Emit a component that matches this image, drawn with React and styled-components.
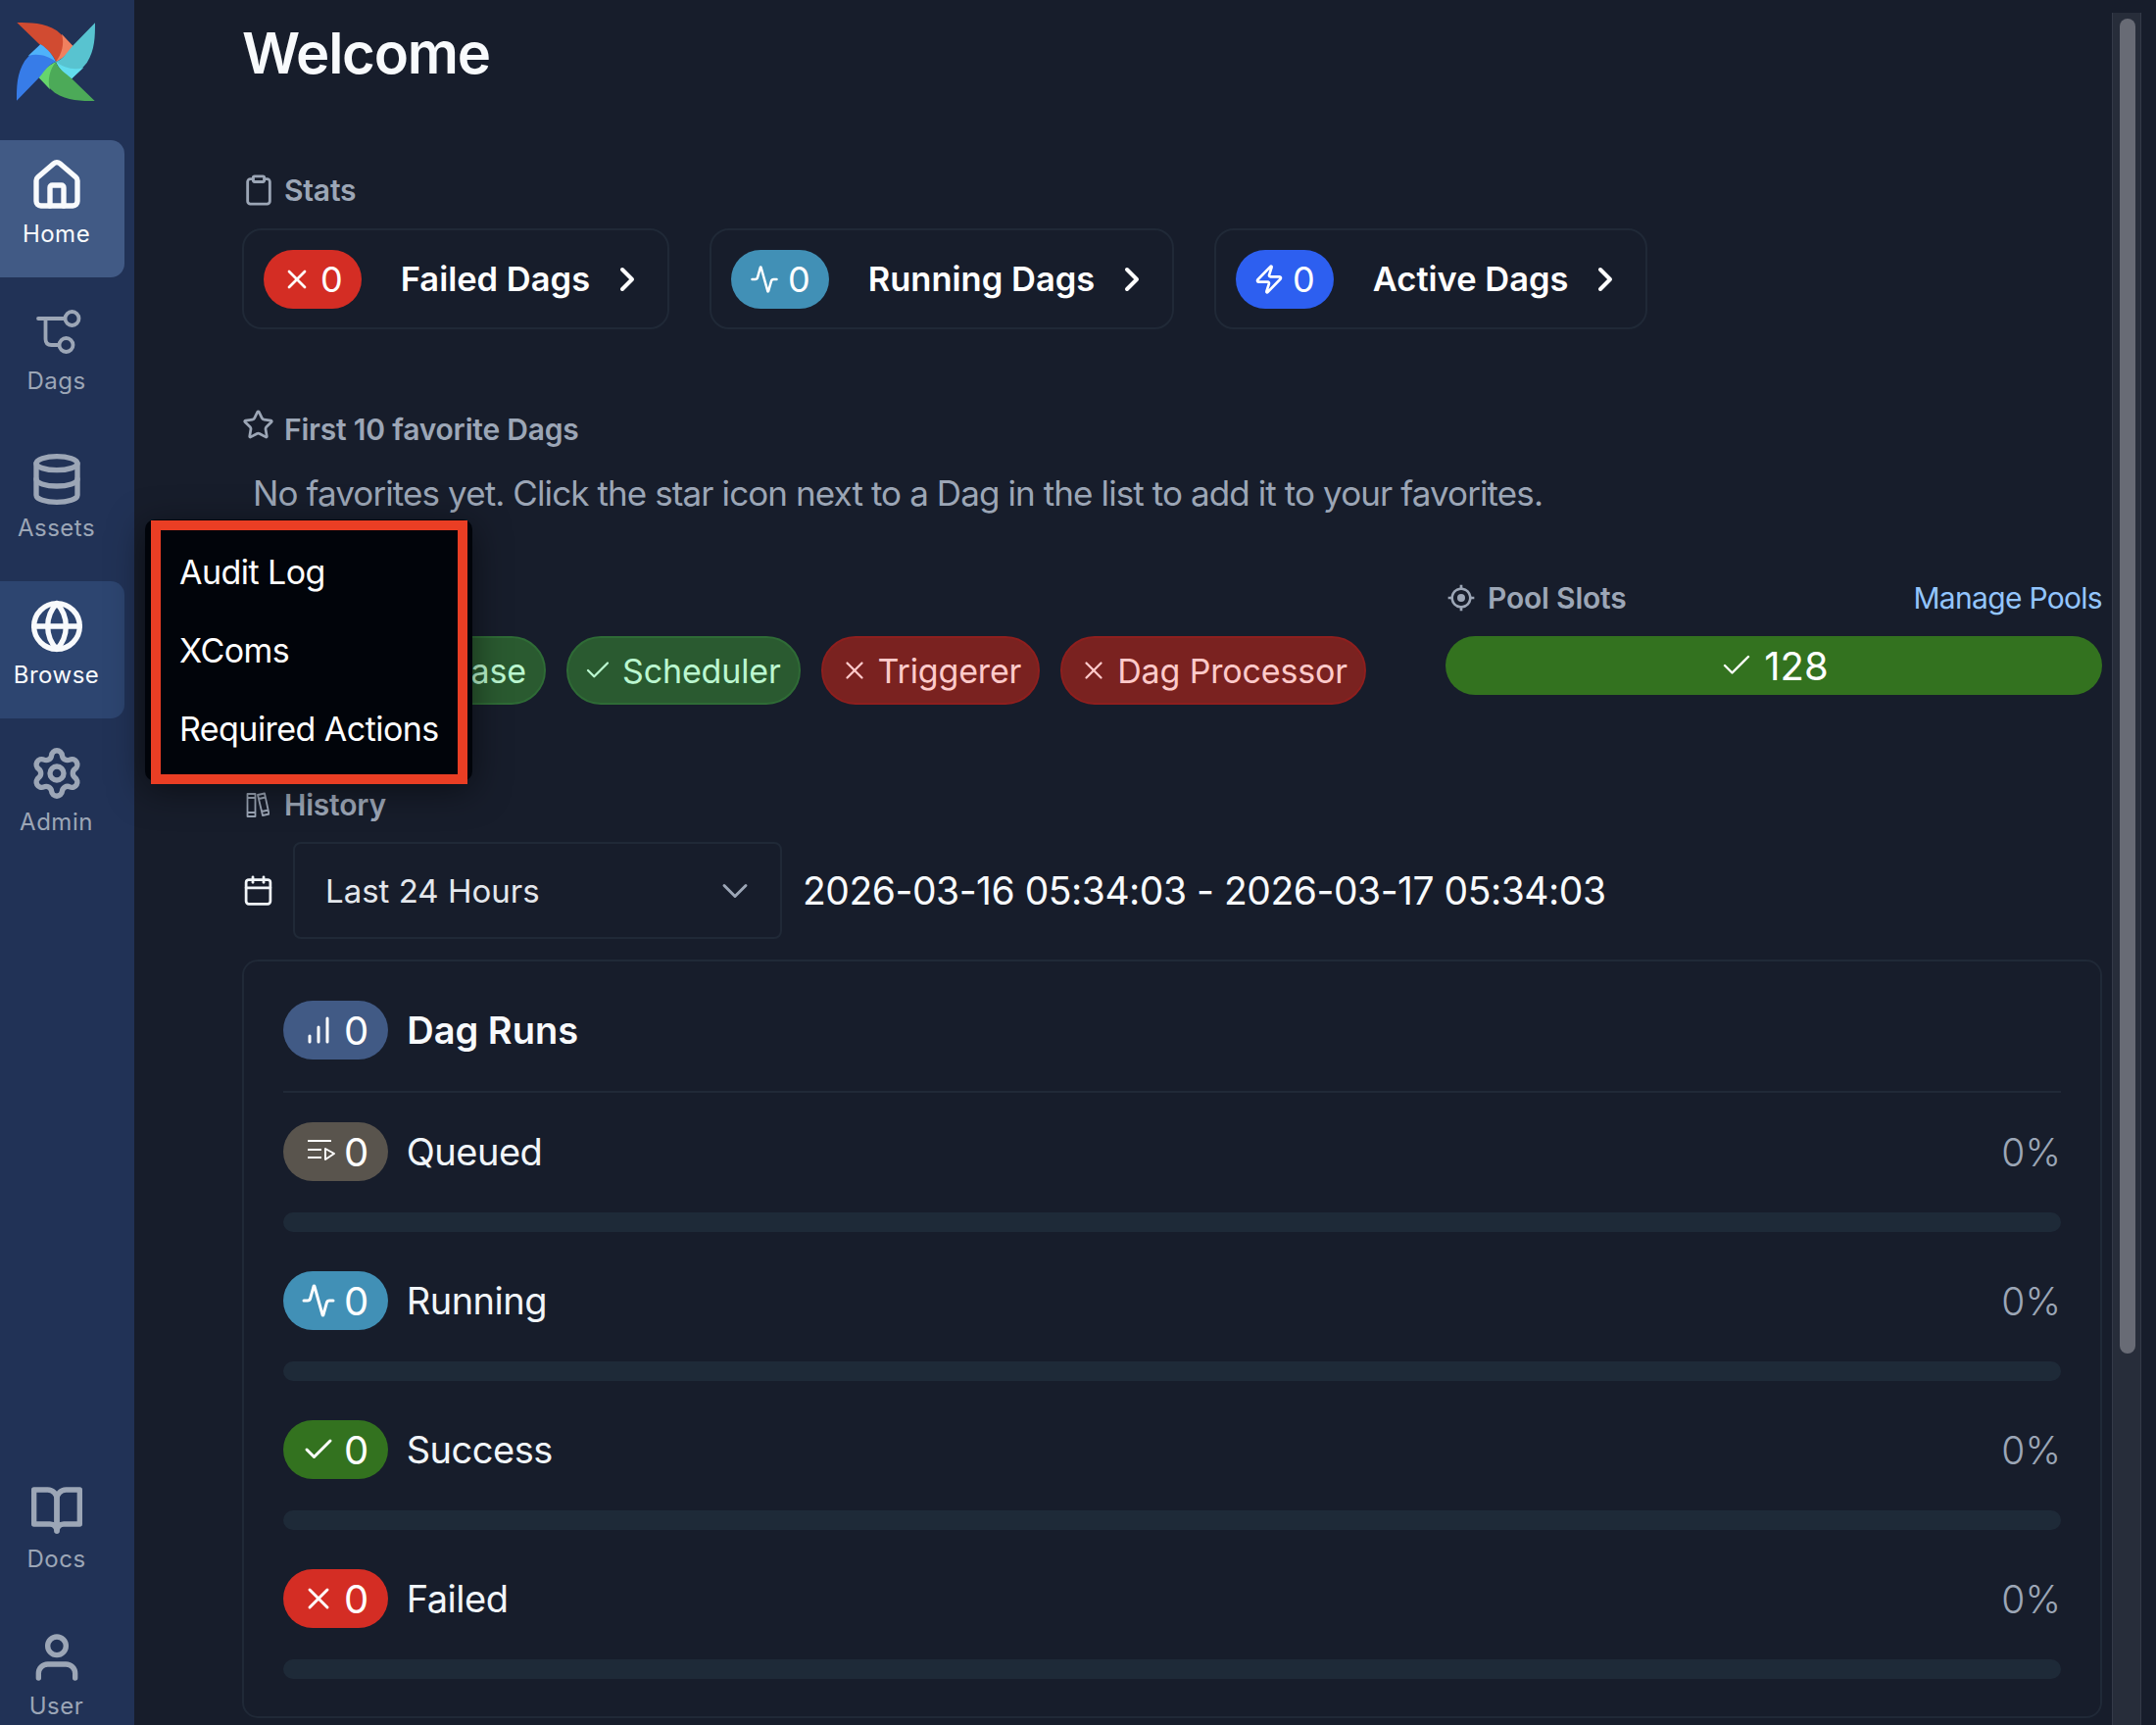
import React from "react";
import styled, { createGlobalStyle } from "styled-components";
import {
  Activity,
  Calendar,
  Check,
  ChevronDown,
  ChevronRight,
  Clipboard,
  Database,
  Globe,
  HeartPulse,
  House,
  Settings,
  Star,
  X,
  Zap,
} from "lucide-react";
import { FiBarChart, FiBookOpen, FiUser } from "react-icons/fi";
import { BiTargetLock } from "react-icons/bi";

const GlobalStyle = createGlobalStyle`
  html, body {
    margin: 0;
    padding: 0;
    background: #171d2b;
  }
  * {
    box-sizing: border-box;
  }
`;

const Page = styled.div`
  position: relative;
  display: flex;
  width: 2200px;
  height: 1760px;
  overflow: hidden;
  background: #171d2b;
  color: #ffffff;
  font-family: Inter, "Liberation Sans", sans-serif;
`;

// Sidebar
const Sidebar = styled.nav`
  flex: 0 0 137px;
  height: 1760px;
  overflow: hidden;
  background: #213256;
`;

const SidebarInner = styled.div`
  display: flex;
  flex-direction: column;
  height: 1785px;
  padding-top: 23px;
`;

const LogoBox = styled.div`
  display: flex;
  height: 80px;
  margin: 0 0 40px 17px;
`;

const NavList = styled.div`
  display: flex;
  flex-direction: column;
  gap: 10px;
  margin-top: ${(p) => (p.$bottom ? "auto" : "0")};
`;

const NavItem = styled.div`
  display: flex;
  flex-direction: column;
  align-items: center;
  width: 127px;
  height: 140px;
  padding: 18px 12px 0 0;
  border-radius: 0 14px 14px 0;
  background: ${(p) => p.$bg || "transparent"};
  color: ${(p) => (p.$bg ? "#f8fafc" : "#9ca6b6")};
`;

const NavLabel = styled.span`
  margin-top: 7px;
  font-size: 24px;
  line-height: 30px;
  letter-spacing: 0.5px;
`;

// Main area
const Main = styled.main`
  flex: 1;
  display: flex;
  min-width: 0;
`;

const Content = styled.div`
  flex: 1;
  min-width: 0;
  padding: 18px 0 0 110px;
`;

const Title = styled.h1`
  margin: 0 0 84px;
  font-size: 58px;
  line-height: 72px;
  font-weight: 600;
  letter-spacing: -1.2px;
  color: #f8fafc;
`;

const Heading = styled.div`
  display: flex;
  align-items: center;
  gap: ${(p) => p.$gap || "15px"};
  height: 40px;
  margin-top: ${(p) => p.$top || "0"};
  font-size: 30px;
  font-weight: 600;
  letter-spacing: -0.2px;
  color: #9ca6b6;
  svg {
    flex: none;
  }
`;

const StarMark = styled(Star)`
  margin-bottom: 10px;
`;

const Spaced = styled.div`
  display: flex;
  justify-content: space-between;
  align-items: center;
`;

const ManageLink = styled.a`
  font-size: 30px;
  letter-spacing: -0.7px;
  color: #93c5fd;
`;

const CardRow = styled.div`
  display: flex;
  gap: 41px;
  margin-top: 19px;
`;

const StatCard = styled.div`
  display: flex;
  align-items: center;
  width: ${(p) => p.$width}px;
  height: 103px;
  padding: 0 21px 0 20px;
  border: 2px solid #202937;
  border-radius: 20px;
`;

const Badge = styled.span`
  display: inline-flex;
  align-items: center;
  flex: none;
  height: 60px;
  padding: ${(p) => (p.$big ? "0 20px 0 18px" : "0 19px 0 18px")};
  gap: 8px;
  border-radius: 30px;
  background: ${(p) => p.$color};
  color: #ffffff;
  font-size: ${(p) => (p.$big ? "40px" : "36px")};
  font-weight: 400;
`;

const ActivityMark = styled(Activity)`
  margin: 0 1px;
`;

const StatLabel = styled.span`
  flex: 1;
  margin-left: 40px;
  font-size: 34.5px;
  font-weight: 600;
  color: #ffffff;
  white-space: nowrap;
`;

const EmptyText = styled.p`
  margin: 23px 0 0 11px;
  font-size: 35px;
  line-height: 44px;
  letter-spacing: -0.9px;
  color: #9ca6b6;
`;

const StatusRow = styled.div`
  display: flex;
  justify-content: space-between;
  margin-top: 65px;
`;

const HealthColumn = styled.div`
  flex: 1;
`;

const PoolColumn = styled.div`
  flex: 0 0 670px;
`;

const PillRow = styled.div`
  display: flex;
  gap: 21px;
  margin-top: 19px;
`;

const HealthPill = styled.span`
  display: inline-flex;
  align-items: center;
  justify-content: ${(p) => (p.$width ? "flex-end" : "flex-start")};
  gap: ${(p) => (p.$ok ? "10px" : "9px")};
  width: ${(p) => (p.$width ? `${p.$width}px` : "auto")};
  height: 70px;
  padding: ${(p) => (p.$ok ? "0 18px 0 15px" : "0 17px")};
  border: 2px solid ${(p) => (p.$ok ? "#2f6b36" : "#8e1f1e")};
  border-radius: 35px;
  background: ${(p) => (p.$ok ? "#2a5a30" : "#7a2220")};
  color: ${(p) => (p.$ok ? "#bbf7d0" : "#fecaca")};
  font-size: 34px;
  letter-spacing: -0.15px;
  white-space: nowrap;
`;

const PoolBar = styled.div`
  display: flex;
  align-items: center;
  justify-content: center;
  gap: 10px;
  height: 60px;
  margin-top: 19px;
  border-radius: 30px;
  background: #33721f;
  font-size: 40px;
`;

const DateRow = styled.div`
  display: flex;
  align-items: center;
  margin-top: 18px;
`;

const CalendarMark = styled(Calendar)`
  flex: none;
  margin-right: 19px;
  color: #f1f5f9;
`;

const SelectBox = styled.div`
  display: flex;
  align-items: center;
  justify-content: space-between;
  width: 499px;
  height: 99px;
  padding: 0 24px 0 31px;
  border: 2px solid #202937;
  border-radius: 8px;
  font-size: 33px;
  color: #e4e7ec;
  svg {
    color: #9ca6b6;
  }
`;

const DateRange = styled.span`
  margin-left: 21px;
  font-size: 39px;
  letter-spacing: -0.48px;
  color: #f8fafc;
`;

const RunsCard = styled.section`
  height: 774px;
  margin-top: 21px;
  padding: 40px 40px 0 40px;
  border: 2px solid #202937;
  border-radius: 16px;
`;

const RunsHeader = styled.div`
  display: flex;
  align-items: center;
  gap: 19px;
  padding-bottom: 32px;
  border-bottom: 2px solid #202937;
  font-size: 38px;
  font-weight: 600;
  color: #f8fafc;
`;

const RunRow = styled.div`
  margin-top: ${(p) => (p.$first ? "30px" : "40px")};
`;

const RunHead = styled.div`
  display: flex;
  align-items: center;
  gap: 19px;
  font-size: 38px;
  letter-spacing: -0.5px;
  color: #f1f5f9;
`;

const RunName = styled.span`
  flex: 1;
`;

const Percent = styled.span`
  font-size: 39px;
  font-weight: 300;
  letter-spacing: 0;
  color: #9ca6b6;
`;

const Track = styled.div`
  height: 20px;
  margin-top: 32px;
  border-radius: 10px;
  background: #1e2a38;
`;

// Scrollbar
const ScrollTrack = styled.div`
  flex: none;
  width: 30px;
  margin: 13px 15px 0 10px;
  padding: 6px 7px 0;
  border-left: 1px solid #343a48;
  border-right: 1px solid #343a48;
  background: #272d3a;
`;

const ScrollThumb = styled.div`
  width: 16px;
  height: 1362px;
  border-radius: 8px;
  background: #686b75;
`;

// Browse menu, open over the page
const Menu = styled.div`
  position: absolute;
  left: 148px;
  top: 530px;
  width: 334px;
  height: 267px;
  padding: 14px 0 0 35px;
  border-radius: 10px;
  background: #01040a;
  box-shadow: 0 8px 36px rgba(0, 0, 0, 0.5);
`;

const MenuItem = styled.div`
  height: 80px;
  font-size: 34px;
  line-height: 80px;
  letter-spacing: -0.55px;
  color: #ffffff;
  white-space: nowrap;
`;

const Highlight = styled.div`
  position: absolute;
  left: 6px;
  top: 1px;
  width: 323px;
  height: 269px;
  border: 10px solid #ea3e24;
`;

const bladeTurns = [
  { turn: 0, main: "#d14b31", light: "#f0805f" },
  { turn: 90, main: "#58c3d0", light: "#62ddee" },
  { turn: 180, main: "#4caa58", light: "#66d56c" },
  { turn: 270, main: "#377ce8", light: "#4fb2fa" },
];

const AirflowLogo = () => (
  <svg width="80" height="80" viewBox="-40 -40 80 80">
    {bladeTurns.map((b) => (
      <g key={b.turn} transform={`rotate(${b.turn})`}>
        <path
          fill={b.main}
          d="M0 0C-3 -8 -9 -11 -15.7 -16.7L-39.7 -40C-26 -40 -12 -40 1 -31.7C7 -27 13 -20 17.7 -15.7C13 -8 6 -3 0 0Z"
        />
        <path
          fill={b.light}
          d="M6 -28.3L17.7 -15.7C13 -8 6 -3 0 0C6 -8 9 -18 6 -28.3Z"
        />
      </g>
    ))}
  </svg>
);

const DagsIcon = () => (
  <svg width="56" height="56" viewBox="0 0 56 56" fill="none" stroke="currentColor" strokeWidth="3.8">
    <path d="M9 14H36" strokeLinecap="round" />
    <circle cx="43.5" cy="14" r="7" />
    <path d="M16.5 14V35Q16.5 41 22.5 41H30.5" />
    <circle cx="37.5" cy="41" r="7" />
  </svg>
);

const HistoryIcon = () => (
  <svg width="28" height="28" viewBox="-2.5 0 28 28" fill="none" stroke="currentColor" strokeWidth="1.8" strokeLinejoin="round">
    <path d="M3 3H11V26H3ZM3 7H11M3 22H11" />
    <path d="M13.5 4L20.5 2.5L25 23.5L18.5 25ZM14.5 8L21.5 6.5M17.5 21L24.5 19.5" />
  </svg>
);

const QueuedIcon = () => (
  <svg width="36" height="36" viewBox="0 0 36 36" fill="none" stroke="currentColor" strokeWidth="2">
    <path d="M7 7H31M7 16H21M7 24H21" />
    <path d="M25 15L34 20L25 26Z" strokeLinejoin="round" />
  </svg>
);

const navIcon = { size: 56, strokeWidth: 2.3 };

const runs = [
  { name: "Queued", color: "#59544d", icon: <QueuedIcon /> },
  { name: "Running", color: "#4190b6", icon: <Activity size={36} strokeWidth={2} /> },
  { name: "Success", color: "#33721f", icon: <Check size={36} strokeWidth={2} /> },
  { name: "Failed", color: "#d42d24", icon: <X size={36} strokeWidth={2} /> },
];

export default function App() {
  return (
    <Page>
      <GlobalStyle />
      <Sidebar>
        <SidebarInner>
          <LogoBox>
            <AirflowLogo />
          </LogoBox>
          <NavList>
            <NavItem $bg="#415a85">
              <House {...navIcon} />
              <NavLabel>Home</NavLabel>
            </NavItem>
            <NavItem>
              <DagsIcon />
              <NavLabel>Dags</NavLabel>
            </NavItem>
            <NavItem>
              <Database {...navIcon} />
              <NavLabel>Assets</NavLabel>
            </NavItem>
            <NavItem $bg="#2d4570">
              <Globe {...navIcon} />
              <NavLabel>Browse</NavLabel>
            </NavItem>
            <NavItem>
              <Settings {...navIcon} />
              <NavLabel>Admin</NavLabel>
            </NavItem>
          </NavList>
          <NavList $bottom>
            <NavItem>
              <FiBookOpen {...navIcon} />
              <NavLabel>Docs</NavLabel>
            </NavItem>
            <NavItem>
              <FiUser {...navIcon} />
              <NavLabel>User</NavLabel>
            </NavItem>
          </NavList>
        </SidebarInner>
      </Sidebar>

      <Main>
        <Content>
          <Title>Welcome</Title>

          <Heading $gap="9px">
            <Clipboard size={34} />
            Stats
          </Heading>
          <CardRow>
            <StatCard $width={436}>
              <Badge $color="#d42d24">
                <X size={32} />0
              </Badge>
              <StatLabel>Failed Dags</StatLabel>
              <ChevronRight size={40} strokeWidth={2.4} />
            </StatCard>
            <StatCard $width={474}>
              <Badge $color="#4190b6">
                <ActivityMark size={30} />0
              </Badge>
              <StatLabel>Running Dags</StatLabel>
              <ChevronRight size={40} strokeWidth={2.4} />
            </StatCard>
            <StatCard $width={442}>
              <Badge $color="#2d5ff0">
                <Zap size={32} />0
              </Badge>
              <StatLabel>Active Dags</StatLabel>
              <ChevronRight size={40} strokeWidth={2.4} />
            </StatCard>
          </CardRow>

          <Heading $top="82px" $gap="10px">
            <StarMark size={33} />
            First 10 favorite Dags
          </Heading>
          <EmptyText>No favorites yet. Click the star icon next to a Dag in the list to add it to your favorites.</EmptyText>

          <StatusRow>
            <HealthColumn>
              <Heading $gap="9px">
                <HeartPulse size={34} />
                Health
              </Heading>
              <PillRow>
                <HealthPill $ok $width={310}>
                  <Check size={30} strokeWidth={1.8} />
                  MetaDatabase
                </HealthPill>
                <HealthPill $ok>
                  <Check size={30} strokeWidth={1.8} />
                  Scheduler
                </HealthPill>
                <HealthPill>
                  <X size={30} strokeWidth={1.8} />
                  Triggerer
                </HealthPill>
                <HealthPill>
                  <X size={30} strokeWidth={1.8} />
                  Dag Processor
                </HealthPill>
              </PillRow>
            </HealthColumn>
            <PoolColumn>
              <Spaced>
                <Heading $gap="11px">
                  <BiTargetLock size={32} />
                  Pool Slots
                </Heading>
                <ManageLink>Manage Pools</ManageLink>
              </Spaced>
              <PoolBar>
                <Check size={36} strokeWidth={1.6} />
                128
              </PoolBar>
            </PoolColumn>
          </StatusRow>

          <Heading $top="82px">
            <HistoryIcon />
            History
          </Heading>
          <DateRow>
            <CalendarMark size={33} />
            <SelectBox>
              Last 24 Hours
              <ChevronDown size={44} strokeWidth={1.6} />
            </SelectBox>
            <DateRange>2026-03-16 05:34:03 - 2026-03-17 05:34:03</DateRange>
          </DateRow>

          <RunsCard>
            <RunsHeader>
              <Badge $big $color="#415a85">
                <FiBarChart size={36} />0
              </Badge>
              Dag Runs
            </RunsHeader>
            {runs.map((run, index) => (
              <RunRow key={run.name} $first={index === 0}>
                <RunHead>
                  <Badge $big $color={run.color}>
                    {run.icon}0
                  </Badge>
                  <RunName>{run.name}</RunName>
                  <Percent>0%</Percent>
                </RunHead>
                <Track />
              </RunRow>
            ))}
          </RunsCard>
        </Content>

        <ScrollTrack>
          <ScrollThumb />
        </ScrollTrack>
      </Main>

      <Menu>
        <MenuItem>Audit Log</MenuItem>
        <MenuItem>XComs</MenuItem>
        <MenuItem>Required Actions</MenuItem>
        <Highlight />
      </Menu>
    </Page>
  );
}
